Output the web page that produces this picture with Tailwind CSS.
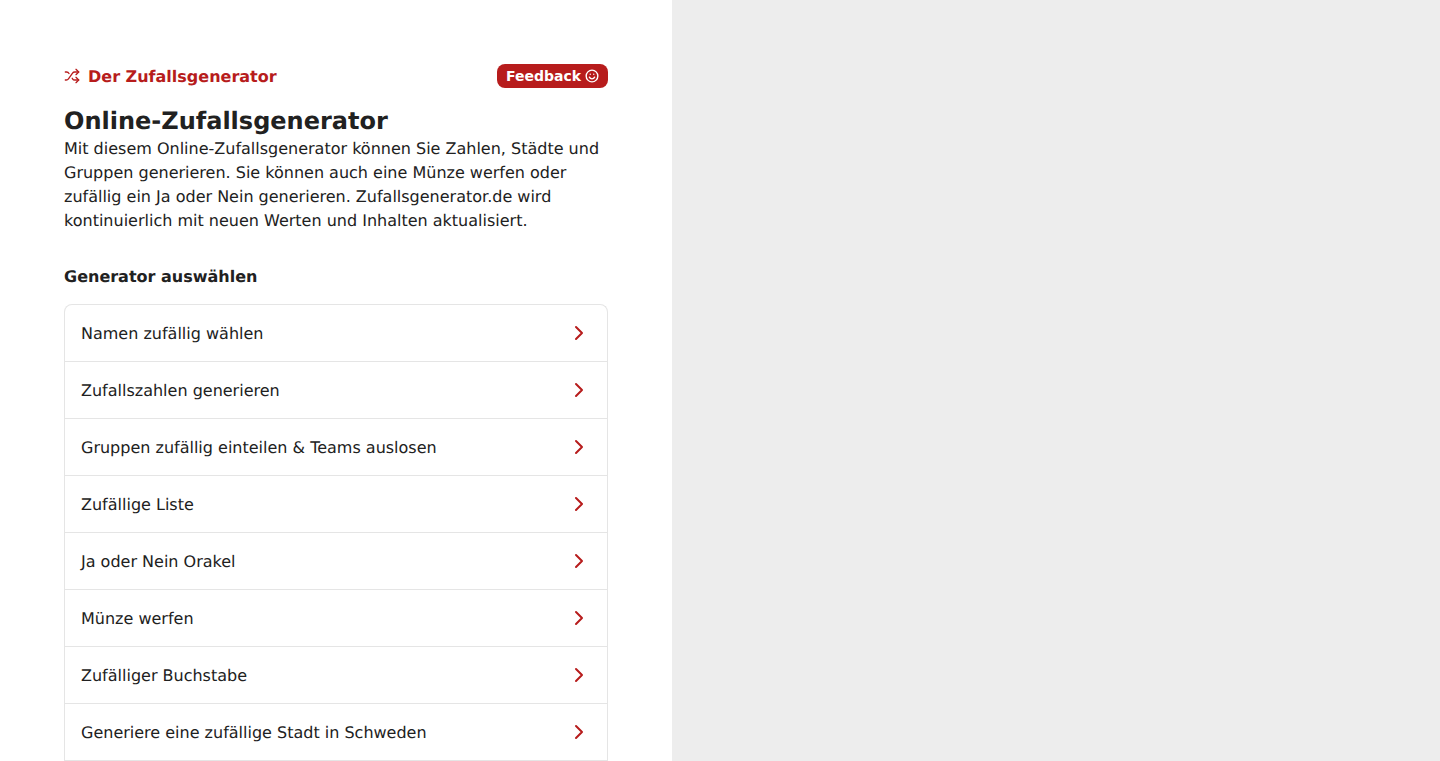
<!DOCTYPE html>
<html lang="de">
<head>
<meta charset="UTF-8">
<meta name="viewport" content="width=device-width, initial-scale=1.0">
<title>Online-Zufallsgenerator</title>
<script src="https://cdn.jsdelivr.net/npm/@tailwindcss/browser@4"></script>
</head>
<body class="bg-white font-['DejaVu_Sans',sans-serif] text-[#212121] antialiased [text-rendering:geometricPrecision]">
<div class="flex h-screen overflow-hidden">
<main class="w-[672px] shrink-0 p-16">
<div class="flex items-center justify-between h-6">
<a href="#" class="flex items-center gap-2 font-bold text-[#b71c1c]">
<svg class="w-4 h-4" viewBox="0 0 24 24" fill="none" stroke="currentColor" stroke-width="2" stroke-linecap="round" stroke-linejoin="round"><path d="M2 18h1.4c1.3 0 2.5-.6 3.3-1.7l6.1-8.6c.7-1.1 2-1.7 3.3-1.7H22"/><path d="m18 2 4 4-4 4"/><path d="M2 6h1.9c1.5 0 2.9.9 3.6 2.2"/><path d="M22 18h-5.9c-1.3 0-2.6-.7-3.3-1.8l-.5-.8"/><path d="m18 14 4 4-4 4"/></svg>
<span class="translate-y-[0.5px]">Der Zufallsgenerator</span>
</a>
<button class="flex items-center gap-1 h-6 px-[9px] rounded-lg bg-[#b71c1c] text-white text-sm font-bold">
Feedback
<svg class="w-[14px] h-[14px]" viewBox="0 0 24 24" fill="none" stroke="currentColor" stroke-width="2.4" stroke-linecap="round" stroke-linejoin="round"><circle cx="12" cy="12" r="10"/><path d="M7.5 14s1.5 3 4.500 3 4.500-3 4.500-3"/><path d="M9 9h.01"/><path d="M15 9h.01"/></svg>
</button>
</div>
<h1 class="mt-4 text-2xl font-bold leading-8 translate-y-[0.5px]">Online-Zufallsgenerator</h1>
<p class="leading-6 translate-y-[0.5px]">Mit diesem Online-Zufallsgenerator können Sie Zahlen, Städte und Gruppen generieren. Sie können auch eine Münze werfen oder zufällig ein Ja oder Nein generieren. Zufallsgenerator.de wird kontinuierlich mit neuen Werten und Inhalten aktualisiert.</p>
<h2 class="mt-8 font-bold leading-6 translate-y-[0.5px]">Generator auswählen</h2>
<ul class="mt-4 border-x border-t border-[#e5e5e5] rounded-t-lg">
<li class="flex items-center justify-between h-[57px] pl-4 pr-4 border-b border-[#e5e5e5]"><span class="translate-y-[0.5px]">Namen zufällig wählen</span><svg class="w-6 h-6 text-[#b71c1c]" viewBox="0 0 24 24" fill="none" stroke="currentColor" stroke-width="2" stroke-linecap="round" stroke-linejoin="round"><path d="m9 18 6-6-6-6"/></svg></li>
<li class="flex items-center justify-between h-[57px] pl-4 pr-4 border-b border-[#e5e5e5]"><span class="translate-y-[0.5px]">Zufallszahlen generieren</span><svg class="w-6 h-6 text-[#b71c1c]" viewBox="0 0 24 24" fill="none" stroke="currentColor" stroke-width="2" stroke-linecap="round" stroke-linejoin="round"><path d="m9 18 6-6-6-6"/></svg></li>
<li class="flex items-center justify-between h-[57px] pl-4 pr-4 border-b border-[#e5e5e5]"><span class="translate-y-[0.5px]">Gruppen zufällig einteilen &amp; Teams auslosen</span><svg class="w-6 h-6 text-[#b71c1c]" viewBox="0 0 24 24" fill="none" stroke="currentColor" stroke-width="2" stroke-linecap="round" stroke-linejoin="round"><path d="m9 18 6-6-6-6"/></svg></li>
<li class="flex items-center justify-between h-[57px] pl-4 pr-4 border-b border-[#e5e5e5]"><span class="translate-y-[0.5px]">Zufällige Liste</span><svg class="w-6 h-6 text-[#b71c1c]" viewBox="0 0 24 24" fill="none" stroke="currentColor" stroke-width="2" stroke-linecap="round" stroke-linejoin="round"><path d="m9 18 6-6-6-6"/></svg></li>
<li class="flex items-center justify-between h-[57px] pl-4 pr-4 border-b border-[#e5e5e5]"><span class="translate-y-[0.5px]">Ja oder Nein Orakel</span><svg class="w-6 h-6 text-[#b71c1c]" viewBox="0 0 24 24" fill="none" stroke="currentColor" stroke-width="2" stroke-linecap="round" stroke-linejoin="round"><path d="m9 18 6-6-6-6"/></svg></li>
<li class="flex items-center justify-between h-[57px] pl-4 pr-4 border-b border-[#e5e5e5]"><span class="translate-y-[0.5px]">Münze werfen</span><svg class="w-6 h-6 text-[#b71c1c]" viewBox="0 0 24 24" fill="none" stroke="currentColor" stroke-width="2" stroke-linecap="round" stroke-linejoin="round"><path d="m9 18 6-6-6-6"/></svg></li>
<li class="flex items-center justify-between h-[57px] pl-4 pr-4 border-b border-[#e5e5e5]"><span class="translate-y-[0.5px]">Zufälliger Buchstabe</span><svg class="w-6 h-6 text-[#b71c1c]" viewBox="0 0 24 24" fill="none" stroke="currentColor" stroke-width="2" stroke-linecap="round" stroke-linejoin="round"><path d="m9 18 6-6-6-6"/></svg></li>
<li class="flex items-center justify-between h-[57px] pl-4 pr-4 border-b border-[#e5e5e5]"><span class="translate-y-[0.5px]">Generiere eine zufällige Stadt in Schweden</span><svg class="w-6 h-6 text-[#b71c1c]" viewBox="0 0 24 24" fill="none" stroke="currentColor" stroke-width="2" stroke-linecap="round" stroke-linejoin="round"><path d="m9 18 6-6-6-6"/></svg></li>
</ul>
</main>
<aside class="flex-1 bg-[#ededed]"></aside>
</div>
</body>
</html>
